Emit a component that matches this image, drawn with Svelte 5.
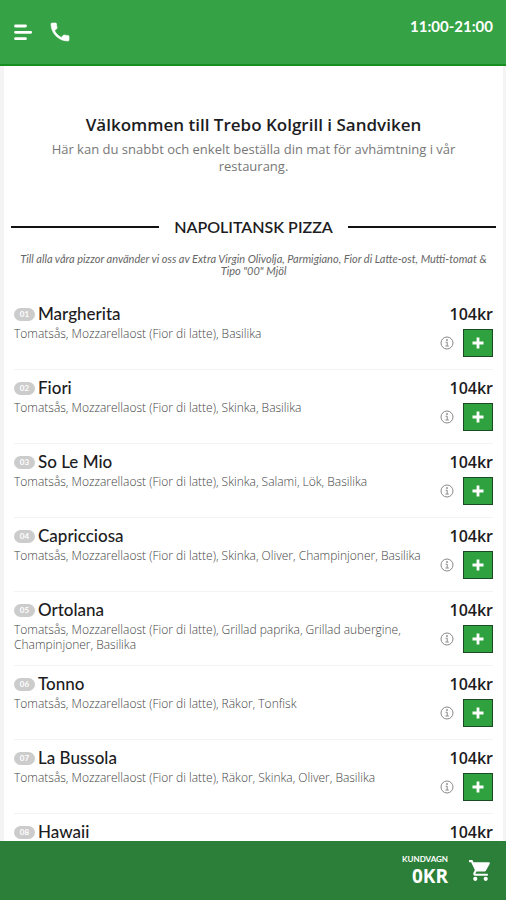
<script lang="ts">
  type Item = { name: string; toppings: string; price: number };

  const base = 'Tomatsås, Mozzarellaost (Fior di latte), ';

  const items: Item[] = [
    { name: 'Margherita', toppings: 'Basilika', price: 104 },
    { name: 'Fiori', toppings: 'Skinka, Basilika', price: 104 },
    { name: 'So Le Mio', toppings: 'Skinka, Salami, Lök, Basilika', price: 104 },
    { name: 'Capricciosa', toppings: 'Skinka, Oliver, Champinjoner, Basilika', price: 104 },
    { name: 'Ortolana', toppings: 'Grillad paprika, Grillad aubergine, Champinjoner, Basilika', price: 104 },
    { name: 'Tonno', toppings: 'Räkor, Tonfisk', price: 104 },
    { name: 'La Bussola', toppings: 'Räkor, Skinka, Oliver, Basilika', price: 104 },
    { name: 'Hawaii', toppings: '', price: 104 },
  ];

  let total = $state(0);
</script>

<div class="app">
  <header class="topbar">
    <button class="icon-btn" aria-label="Meny">
      <svg width="20" height="20" viewBox="0 0 20 20" stroke="#fff" stroke-width="2.8" stroke-linecap="round">
        <path d="M2.5 4h10M2.5 10.3h15.2M2.5 16.7h10" />
      </svg>
    </button>
    <a class="icon-btn" href="tel:026" aria-label="Ring">
      <svg width="24" height="24" viewBox="0 0 24 24" fill="#fff" stroke="#fff" stroke-width=".6">
        <path d="M6.62 10.79c1.44 2.83 3.76 5.14 6.59 6.59l2.2-2.2c.27-.27.67-.36 1.02-.24 1.12.37 2.33.57 3.57.57.55 0 1 .45 1 1V20c0 .55-.45 1-1 1C10.61 21 3 13.39 3 4c0-.55.45-1 1-1h3.5c.55 0 1 .45 1 1 0 1.25.2 2.45.57 3.57.11.35.03.74-.25 1.02l-2.2 2.2z" />
      </svg>
    </a>
    <span class="hours">11:00-21:00</span>
  </header>

  <main class="scroll">
    <div class="page">
      <section class="intro">
        <h1>Välkommen till Trebo Kolgrill i Sandviken</h1>
        <p>Här kan du snabbt och enkelt beställa din mat för avhämtning i vår restaurang.</p>
      </section>

      <h2 class="category">Napolitansk Pizza</h2>
      <p class="note">
        Till alla våra pizzor använder vi oss av Extra Virgin Olivolja, Parmigiano, Fior di Latte-ost, Mutti-tomat &amp; Tipo "00" Mjöl
      </p>

      <ul class="menu">
        {#each items as item, i}
          <li class="row">
            <div class="info">
              <h3><span class="num">{String(i + 1).padStart(2, '0')}</span>{item.name}</h3>
              {#if item.toppings}
                <p>{base}{item.toppings}</p>
              {/if}
            </div>
            <div class="side">
              <span class="price">{item.price}kr</span>
              <div class="actions">
                <button class="info-btn" aria-label="Info om {item.name}">
                  <svg width="14" height="14" viewBox="0 0 14 14" fill="none" stroke="#888">
                    <circle cx="7" cy="7" r="6" />
                    <path d="M5.6 6.2h1.6v3.6M5.4 10h3.4" />
                    <circle cx="7" cy="4" r=".5" fill="#888" />
                  </svg>
                </button>
                <button class="add-btn" aria-label="Lägg till {item.name}" onclick={() => (total += item.price)}>
                  <svg width="12" height="12" viewBox="0 0 12 12" stroke="#fff" stroke-width="2.8">
                    <path d="M6 .5v11M.5 6h11" />
                  </svg>
                </button>
              </div>
            </div>
          </li>
        {/each}
      </ul>
    </div>
  </main>

  <footer class="cart">
    <div class="sum">
      <span class="label">Kundvagn</span>
      <span class="total">{total}kr</span>
    </div>
    <button class="icon-btn" aria-label="Visa kundvagn">
      <svg width="25" height="25" viewBox="0 0 24 24" fill="#fff">
        <path d="M7 18c-1.1 0-1.99.9-1.99 2S5.9 22 7 22s2-.9 2-2-.9-2-2-2zM1 2v2h2l3.6 7.59-1.35 2.45c-.16.28-.25.61-.25.96 0 1.1.9 2 2 2h12v-2H7.42c-.14 0-.25-.11-.25-.25l.03-.12.9-1.63h7.45c.75 0 1.41-.41 1.75-1.03l3.58-6.49A1 1 0 0 0 20 4H5.21l-.94-2H1zm16 16c-1.1 0-1.99.9-1.99 2s.89 2 1.99 2 2-.9 2-2-.9-2-2-2z" />
      </svg>
    </button>
  </footer>
</div>

<style>
  :global(body) {
    margin: 0;
  }

  .app {
    display: flex;
    flex-direction: column;
    height: 100vh;
    font-family: 'Open Sans', sans-serif;
    color: #1c1c22;
    background: #f4f4f5;
  }

  h1, h2, h3, p, ul {
    margin: 0;
    padding: 0;
  }

  button {
    padding: 0;
    border: 0;
    background: none;
    cursor: pointer;
  }

  svg {
    display: block;
  }

  .topbar {
    display: flex;
    align-items: flex-start;
    gap: 15px;
    height: 66px;
    flex-shrink: 0;
    box-sizing: border-box;
    padding: 16px 13px 0;
    background: #34a245;
    border-bottom: 2px solid #168f20;
  }

  .icon-btn {
    display: flex;
    align-items: center;
    height: 32px;
  }

  .hours {
    margin-left: auto;
    font: 700 15px/20px Lato, sans-serif;
    color: #fff;
  }

  .scroll {
    flex: 1;
    min-height: 0;
    overflow-y: auto;
    scrollbar-width: none;
  }

  .page {
    margin: 0 3px 0 4px;
    padding: 47px 7px 0;
    background: #fff;
  }

  .intro {
    padding: 0 32px;
    text-align: center;
  }

  .intro h1 {
    font-size: 17px;
    line-height: 24px;
    font-weight: 600;
  }

  .intro p {
    margin-top: 4px;
    font-size: 13px;
    line-height: 17px;
    color: #777;
  }

  .category {
    display: flex;
    align-items: center;
    gap: 15px;
    margin-top: 40px;
    font: 600 16px/24px Lato, sans-serif;
    text-transform: uppercase;
  }

  .category::before,
  .category::after {
    content: '';
    flex: 1;
    height: 2px;
    background: #111;
  }

  .note {
    margin-top: 14px;
    font: italic 400 11px/12px Lato, sans-serif;
    text-align: center;
    color: #666;
  }

  .menu {
    margin: 19px 3px 0;
    list-style: none;
  }

  .row {
    display: flex;
    justify-content: space-between;
    min-height: 74px;
    box-sizing: border-box;
    padding-top: 8px;
    border-bottom: 1px solid #f3f3f3;
  }

  .info h3 {
    display: flex;
    align-items: center;
    gap: 3px;
    font: 500 17px/20px Lato, sans-serif;
  }

  .num {
    width: 21px;
    border-radius: 7px;
    background: #ccc;
    color: #fff;
    font-size: 8px;
    line-height: 13px;
    font-weight: 700;
    text-align: center;
  }

  .info p {
    margin-top: 2px;
    font-size: 12px;
    line-height: 15px;
    font-weight: 300;
    color: #444;
  }

  .side {
    display: flex;
    flex-direction: column;
    align-items: flex-end;
    flex-shrink: 0;
    width: 64px;
  }

  .price {
    font-size: 16px;
    line-height: 20px;
    font-weight: 600;
  }

  .actions {
    display: flex;
    align-items: center;
    gap: 9px;
    margin-top: 5px;
  }

  .add-btn {
    display: flex;
    align-items: center;
    justify-content: center;
    width: 30px;
    height: 28px;
    box-sizing: border-box;
    border: 1px solid #1c4a22;
    background: #2fa13f;
  }

  .cart {
    display: flex;
    align-items: center;
    justify-content: flex-end;
    gap: 20px;
    height: 59px;
    flex-shrink: 0;
    padding: 0 13px;
    background: #2b7f39;
    color: #fff;
  }

  .sum {
    display: flex;
    flex-direction: column;
    align-items: flex-end;
    text-transform: uppercase;
  }

  .label {
    font: 700 8px/10px Lato, sans-serif;
  }

  .total {
    font-size: 19px;
    line-height: 24px;
    font-weight: 700;
  }
</style>
